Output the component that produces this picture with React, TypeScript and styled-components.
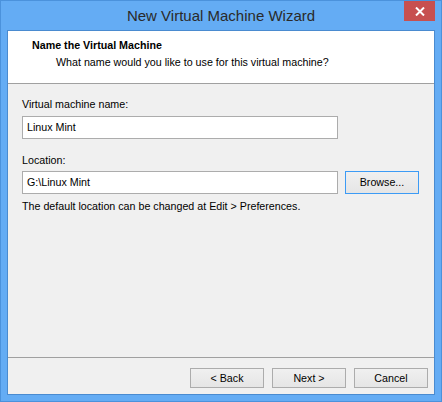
import React from "react";
import styled, { createGlobalStyle } from "styled-components";

const Global = createGlobalStyle`
  * { box-sizing: border-box; }
  html, body { margin: 0; padding: 0; background: #ffffff; }
  body { font-family: "Liberation Sans", Arial, sans-serif; }
`;

const Window = styled.div`
  width: 442px;
  height: 402px;
  border: 1px solid #4b92dc;
  background: #64acf4;
  display: flex;
  flex-direction: column;
  padding: 0 6px 6px 6px;
`;

const TitleBar = styled.div`
  height: 29px;
  display: grid;
  grid-template-columns: 1fr auto 1fr;
  align-items: start;
  margin: 0 -6px;
`;

const Title = styled.div`
  grid-column: 2;
  font-family: "Liberation Sans", Arial, sans-serif;
  font-size: 15px;
  line-height: 29px;
  color: #2a2a2a;
  white-space: nowrap;
`;

const CloseButton = styled.div`
  grid-column: 3;
  justify-self: end;
  margin-right: 6px;
  width: 31px;
  height: 20px;
  background: #c75050;
  display: flex;
  align-items: center;
  justify-content: center;
`;

const Client = styled.div`
  flex: 1;
  border: 1px solid #4a8bd0;
  background: #f0f0f0;
  display: flex;
  flex-direction: column;
  font-size: 10.7px;
  line-height: 13px;
  color: #000;
`;

const Header = styled.div`
  height: 53px;
  background: #ffffff;
  border-bottom: 1px solid #a0a0a0;
  padding: 8px 0 0 24px;
  display: flex;
  flex-direction: column;
  gap: 4px;
`;

const Heading = styled.div`
  font-weight: bold;
`;

const SubHeading = styled.div`
  padding-left: 24px;
`;

const Body = styled.div`
  flex: 1;
  padding: 14px 0 0 14px;
  display: flex;
  flex-direction: column;
`;

const Field = styled.div<{ $mt?: number; $gap?: number }>`
  display: flex;
  flex-direction: column;
  gap: ${(p) => p.$gap ?? 5}px;
  margin-top: ${(p) => p.$mt ?? 0}px;
`;

const Row = styled.div`
  display: flex;
  gap: 7px;
  align-items: center;
`;

const TextBox = styled.div`
  width: 316px;
  height: 23px;
  border: 1px solid #acacac;
  background: #ffffff;
  padding: 0 4px;
  display: flex;
  align-items: center;
`;

const Button = styled.div<{ $default?: boolean; $h?: number }>`
  width: 74px;
  height: ${(p) => p.$h ?? 20}px;
  border: 1px solid ${(p) => (p.$default ? "#3c9bf5" : "#acacac")};
  background: linear-gradient(#f0f0f0, #e5e5e5);
  display: flex;
  align-items: center;
  justify-content: center;
`;

const Hint = styled.div`
  margin-top: 6px;
`;

const Footer = styled.div`
  border-top: 1px solid #a0a0a0;
  padding: 10px 6px 6px 0;
  display: flex;
  justify-content: flex-end;
  gap: 8px;
`;

export default function App() {
  return (
    <>
      <Global />
      <Window>
        <TitleBar>
          <Title>New Virtual Machine Wizard</Title>
          <CloseButton>
            <svg width="10" height="9" viewBox="0 0 10 9">
              <path d="M1 0.5 L9 8.5 M9 0.5 L1 8.5" stroke="#ffffff" strokeWidth="2" />
            </svg>
          </CloseButton>
        </TitleBar>
        <Client>
          <Header>
            <Heading>Name the Virtual Machine</Heading>
            <SubHeading>What name would you like to use for this virtual machine?</SubHeading>
          </Header>
          <Body>
            <Field>
              <div>Virtual machine name:</div>
              <TextBox>Linux Mint</TextBox>
            </Field>
            <Field $mt={15} $gap={4}>
              <div>Location:</div>
              <Row>
                <TextBox>G:\Linux Mint</TextBox>
                <Button $default $h={23}>Browse...</Button>
              </Row>
            </Field>
            <Hint>The default location can be changed at Edit &gt; Preferences.</Hint>
          </Body>
          <Footer>
            <Button>&lt; Back</Button>
            <Button>Next &gt;</Button>
            <Button>Cancel</Button>
          </Footer>
        </Client>
      </Window>
    </>
  );
}
